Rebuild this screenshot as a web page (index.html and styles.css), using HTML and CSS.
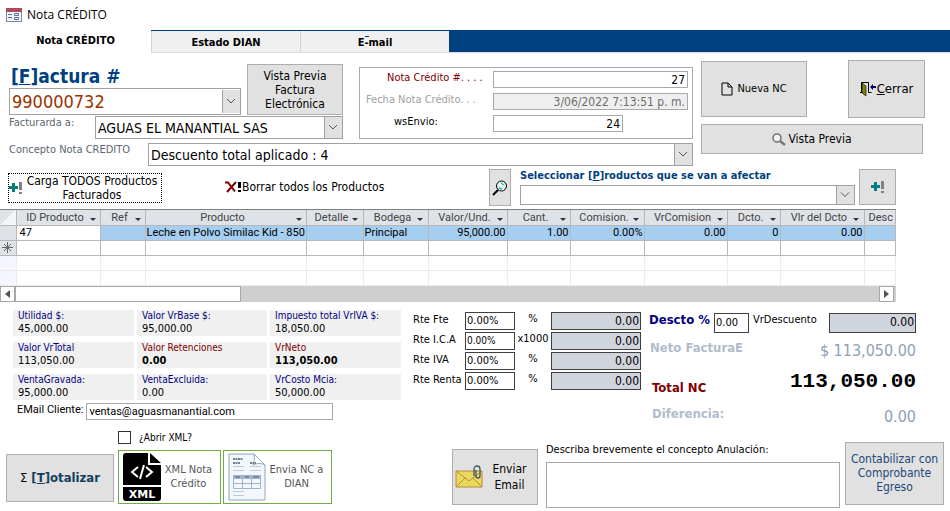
FILE: index.html
```
<!DOCTYPE html>
<html lang="es">
<head>
  <meta charset="UTF-8"/>
  <meta name="viewport" content="width=device-width,initial-scale=1"/>
  <title>Nota CRÉDITO</title>
  <link rel="stylesheet" href="styles.css">
</head>
<body>

  <!-- Icons used more than once -->
  <svg class="sprite" aria-hidden="true">
    <symbol id="plus" viewBox="0 0 14 12">
      <path d="M3 1h3v3h3v3H6v3H3V7H0V4h3z" fill="#008080"/>
      <path d="M10 0h3v8h-3zM10 10h3v2h-3z" fill="#808080"/>
    </symbol>
  </svg>

  <header class="titlebar">
    <svg width="16" height="14" viewBox="0 0 16 14" aria-hidden="true">
      <rect x=".5" y=".5" width="15" height="13" fill="#f4f6fa" stroke="#7a86a8"/>
      <path d="M0 0h16v4H0z" fill="#b04a60"/>
      <path d="M2 6.500h4M2 9.500h4" stroke="#5a6a98"/>
      <path d="M8.500 5.500h4v2h-4zM8.500 9.500h4v2h-4z" fill="#fff" stroke="#5a6a98"/>
    </svg>
    <h1>Nota CRÉDITO</h1>
  </header>

  <nav class="tabs">
    <a class="tab active" href="#nota">Nota CRÉDITO</a>
    <a class="tab" href="#estado">Estado DIAN</a>
    <a class="tab marked" href="#email">E-mail</a>
  </nav>

  <main id="nota">

    <!-- INVOICE HEADER -->
    <section class="head">
      <div class="head-left">
        <div class="head-top">
          <div class="invoice">
            <div class="invoice-row">
              <div class="invoice-num">
                <label class="big-label" for="factura">[<u>F</u>]actura #</label>
                <select class="combo combo-big" id="factura"><option>990000732</option></select>
              </div>
              <button class="btn preview-fe">Vista Previa Factura Electrónica</button>
            </div>
            <div class="client-row">
              <label class="muted" for="cliente">Facturarda a:</label>
              <select class="combo" id="cliente"><option>AGUAS EL MANANTIAL SAS</option></select>
            </div>
          </div>
          <div class="note-box">
            <label class="maroon" for="nota-num">Nota Crédito #. . . .</label>
            <input class="num" id="nota-num" value="27">
            <label class="dim" for="fecha">Fecha Nota Crédito. . .</label>
            <input class="num date" id="fecha" value="3/06/2022 7:13:51 p. m." disabled>
            <label class="ws" for="ws">wsEnvio:</label>
            <input class="num ws-input" id="ws" value="24">
          </div>
        </div>
        <div class="concept-row">
          <label class="muted" for="concepto">Concepto Nota CREDITO</label>
          <select class="combo" id="concepto"><option>Descuento total aplicado : 4</option></select>
        </div>
      </div>

      <div class="head-right">
        <div class="head-buttons">
          <button class="btn new-nc">
            <svg width="12" height="14" viewBox="0 0 12 14" aria-hidden="true"><path d="M1 1h6l4 4v8H1zM7 1v4h4" fill="none" stroke="#000"/></svg>
            Nueva NC
          </button>
          <button class="btn close">
            <svg width="17" height="16" viewBox="0 0 17 16" aria-hidden="true">
              <path d="M0 11.500h2M1.500 11V1.500h7V11.500h3" fill="none" stroke="#000"/>
              <path d="M2 2l4 3v10l-4-3z" fill="#808000" stroke="#000" stroke-width=".6"/>
              <path d="M10 6l3-3v2h3v2h-3v2z" fill="#000080"/>
            </svg>
            <span><u>C</u>errar</span>
          </button>
        </div>
        <button class="btn preview">
          <svg width="14" height="13" viewBox="0 0 14 13" aria-hidden="true">
            <circle cx="5" cy="5" r="4" fill="#f4f4f4" stroke="#777" stroke-width="1.600"/>
            <path d="M8 8l5 4" stroke="#777" stroke-width="2.400"/>
          </svg>
          Vista Previa
        </button>
      </div>
    </section>

    <!-- PRODUCT ACTIONS -->
    <section class="actions">
      <button class="link-btn load-all">
        <svg width="14" height="12" aria-hidden="true"><use href="#plus"/></svg>
        <span>Carga TODOS Productos Facturados</span>
      </button>
      <button class="link-btn">
        <svg width="17" height="12" viewBox="0 0 17 12" aria-hidden="true">
          <path d="M0 1.500h3l7 9M11 1L2 11" fill="none" stroke="#800000" stroke-width="2"/>
          <path d="M13 1h3v6h-3zM13 9h3v2h-3z"/>
        </svg>
        Borrar todos los Productos
      </button>
      <button class="btn search" aria-label="Buscar">
        <svg width="16" height="16" viewBox="0 0 16 16" aria-hidden="true">
          <path d="M1 15l5-5" stroke="#000" stroke-width="2"/>
          <circle cx="9.500" cy="6" r="5" fill="#eee" stroke="#000"/>
          <path d="M9 3l3 2M7 8l3 1" stroke="#0cc" stroke-width="1.500"/>
        </svg>
      </button>
      <div class="pick">
        <label for="productos">Seleccionar [<u>P</u>]roductos que se van a afectar</label>
        <select class="combo" id="productos"><option></option></select>
      </div>
      <button class="btn add" aria-label="Agregar">
        <svg width="14" height="12" aria-hidden="true"><use href="#plus"/></svg>
      </button>
    </section>

    <!-- PRODUCT GRID -->
    <section class="sheet">
      <table>
        <colgroup>
          <col class="c-sel"><col class="c-id"><col class="c-ref"><col class="c-prod"><col class="c-det"><col class="c-bod">
          <col class="c-val"><col class="c-cant"><col class="c-com"><col class="c-vrc"><col class="c-dcto"><col class="c-vlr"><col>
        </colgroup>
        <thead>
          <tr>
            <th class="corner"></th>
            <th><span>ID Producto</span></th><th><span>Ref</span></th><th><span>Producto</span></th>
            <th><span>Detalle</span></th><th><span>Bodega</span></th><th><span>Valor/Und.</span></th>
            <th><span>Cant.</span></th><th><span>Comision.</span></th><th><span>VrComision</span></th>
            <th><span>Dcto.</span></th><th><span>Vlr del Dcto</span></th><th class="cut"><span>Desc</span></th>
          </tr>
        </thead>
        <tbody>
          <tr class="current">
            <td class="sel"></td><td class="editing">47</td><td></td><td>Leche en Polvo Similac Kid - 850</td><td></td><td>Principal</td>
            <td class="r">95,000.00</td><td class="r">1.00</td><td class="r">0.00%</td><td class="r">0.00</td><td class="r">0</td><td class="r">0.00</td><td></td>
          </tr>
          <tr>
            <td class="sel"><svg width="11" height="11" viewBox="0 0 11 11" aria-hidden="true"><path d="M5.500 0v11M0 5.500h11M2 2l7 7M9 2l-7 7" stroke="#666"/></svg></td>
            <td></td><td></td><td></td><td></td><td></td><td></td><td></td><td></td><td></td><td></td><td></td><td></td>
          </tr>
          <tr class="blank"><td class="sel"></td><td></td><td></td><td></td><td></td><td></td><td></td><td></td><td></td><td></td><td></td><td></td><td></td></tr>
          <tr class="blank"><td class="sel"></td><td></td><td></td><td></td><td></td><td></td><td></td><td></td><td></td><td></td><td></td><td></td><td></td></tr>
        </tbody>
      </table>
      <div class="hscroll">
        <button class="arrow" aria-label="Izquierda"><svg width="5" height="8" viewBox="0 0 5 8"><path d="M5 0v8L0 4z" fill="#555"/></svg></button>
        <div class="thumb"></div>
        <button class="arrow" aria-label="Derecha"><svg width="5" height="8" viewBox="0 0 5 8"><path d="M0 0v8l5-4z" fill="#555"/></svg></button>
      </div>
    </section>

    <!-- TOTALS -->
    <section class="totals">
      <div class="summary">
        <dl class="cards">
          <div><dt>Utilidad $:</dt><dd>45,000.00</dd></div>
          <div><dt>Valor VrBase $:</dt><dd>95,000.00</dd></div>
          <div><dt>Impuesto total VrIVA $:</dt><dd>18,050.00</dd></div>
          <div><dt>Valor VrTotal</dt><dd>113,050.00</dd></div>
          <div class="strong"><dt>Valor Retenciones</dt><dd>0.00</dd></div>
          <div class="strong"><dt>VrNeto</dt><dd>113,050.00</dd></div>
          <div><dt>VentaGravada:</dt><dd>95,000.00</dd></div>
          <div><dt>VentaExcluida:</dt><dd>0.00</dd></div>
          <div><dt>VrCosto Mcia:</dt><dd>50,000.00</dd></div>
        </dl>
        <div class="mail-row">
          <label for="mail">EMail Cliente:</label>
          <input id="mail" value="ventas@aguasmanantial.com">
        </div>
      </div>

      <div class="rates">
        <label for="fte">Rte Fte</label><input id="fte" value="0.00%"><span>%</span><output>0.00</output>
        <label for="ica">Rte I.C.A</label><input class="small" id="ica" value="0.00%"><span>x1000</span><output>0.00</output>
        <label for="iva">Rte IVA</label><input id="iva" value="0.00%"><span>%</span><output>0.00</output>
        <label for="renta">Rte Renta</label><input id="renta" value="0.00%"><span>%</span><output>0.00</output>
      </div>

      <div class="results">
        <div class="discount">
          <label class="navy" for="descto">Descto %</label>
          <input id="descto" value="0.00">
          <span>VrDescuento</span>
          <output>0.00</output>
        </div>
        <div class="result soft"><span>Neto FacturaE</span><output>$ 113,050.00</output></div>
        <div class="result total"><span>Total NC</span><output>113,050.00</output></div>
        <div class="result soft diff"><span>Diferencia:</span><output>0.00</output></div>
      </div>
    </section>

    <!-- FOOTER BUTTONS -->
    <section class="foot">
      <button class="btn totalize"><span>Σ</span> <b>[<u>T</u>]otalizar</b></button>
      <div class="xml">
        <label class="open-xml"><input type="checkbox"> ¿Abrir XML?</label>
        <div class="xml-buttons">
          <button class="green-btn">
            <svg width="38" height="48" viewBox="0 0 38 48" aria-hidden="true">
              <path d="M3 0h22v12h13v20H0V3a3 3 0 0 1 3-3z"/>
              <path d="M27 0l11 10H27zM0 34h38v11a3 3 0 0 1-3 3H3a3 3 0 0 1-3-3z"/>
              <path d="M15 14l-6 5 6 5M23 14l6 5-6 5M21 12l-4 14" fill="none" stroke="#fff" stroke-width="2"/>
              <text class="xml-text" x="19" y="45" text-anchor="middle">XML</text>
            </svg>
            <span>XML Nota Crédito</span>
          </button>
          <button class="green-btn">
            <svg width="38" height="48" viewBox="0 0 38 48" aria-hidden="true">
              <path d="M1 1h25l11 11v35H1z" fill="#f3f7fb" stroke="#8fa6bd"/>
              <path d="M26 1c1 5 0 9-1 11 4-2 8-2 12 0z" fill="#fff" stroke="#8fa6bd"/>
              <path d="M5 6h10M5 10h7M22 10h6" stroke="#4a5a6c" stroke-width="1.500" stroke-dasharray="2 .5"/>
              <path d="M5 13.500h11M5 17.500h11M22 13.500h11M22 17.500h11M5 38.500h11M5 42.500h11" stroke="#b9cbdc"/>
              <path d="M5 22h28v4H5z" fill="#a3b7cb"/>
              <path d="M7 24h5M17 24h4M25 24h6" stroke="#4a5a6c"/>
              <path d="M5.500 22.500h27v13h-27zM5.500 30.500h27M14.500 22v13M23.500 22v13" fill="none" stroke="#9db4ca"/>
            </svg>
            <span>Envia NC a DIAN</span>
          </button>
        </div>
      </div>
      <button class="btn send">
        <svg width="29" height="24" viewBox="0 0 29 24" aria-hidden="true">
          <path d="M1 6h26v16H1z" fill="#e8d95c" stroke="#b98a3c"/>
          <path d="M1 6l13 10L27 6M1 22l9-9M27 22l-9-9" fill="none" stroke="#c08a3a"/>
          <path d="M19 11V4a3 3 0 0 1 6 0v7a2 2 0 0 1-4 0V5" fill="none" stroke="#3a5570" stroke-width="1.300"/>
        </svg>
        <span>Enviar Email</span>
      </button>
      <div class="concept">
        <label for="anulacion">Describa brevemente el concepto Anulación:</label>
        <textarea id="anulacion"></textarea>
      </div>
      <button class="btn egress">Contabilizar con Comprobante Egreso</button>
    </section>

  </main>
</body>
</html>
```
FILE: styles.css
```
* { box-sizing: border-box; }
body {
  margin: 0;
  font: 12px/14px "DejaVu Sans Condensed", "Noto Sans", sans-serif;
  background: #fff;
  color: #000;
}
input, select, button, textarea {
  font: inherit;
  color: inherit;
  margin: 0;
  border-radius: 0;
}
.sprite { display: block; width: 0; height: 0; }
svg { flex: none; }

.titlebar {
  display: flex;
  align-items: center;
  gap: 5px;
  height: 30px;
  padding: 0 6px;
}
.titlebar h1 {
  margin: 0;
  font: 12px/16px "Open Sans", sans-serif;
}

.tabs {
  display: flex;
  height: 23px;
  background: linear-gradient(90deg, #fff 151px, #003f80 151px);
  border-bottom: 1px solid #dcdcdc;
}
.tab {
  width: 149px;
  margin-top: 1px;
  padding-top: 5px;
  background: #f0f0f0;
  border-left: 1px solid #d4d4d4;
  color: #000;
  font-weight: bold;
  font-size: 11px;
  text-align: center;
  text-decoration: none;
}
.tab.active {
  width: 151px;
  height: 23px;
  margin-top: 0;
  padding-top: 4px;
  background: #fff;
  border: 0;
}
.marked {
  background: linear-gradient(#003f80, #003f80) 64px 5px / 4px 1px no-repeat #f0f0f0;
}

.btn {
  display: flex;
  align-items: center;
  justify-content: center;
  gap: 4px;
  padding: 0;
  background: #e1e1e1;
  border: 1px solid #adadad;
}
.combo {
  appearance: none;
  height: 23px;
  padding: 0 22px 0 2px;
  font-size: 14px;
  border: 1px solid #a0a0a0;
  background:
    url("data:image/svg+xml,%3Csvg xmlns='http://www.w3.org/2000/svg' width='18' height='23'%3E%3Cpath d='M.5 0v23' stroke='%23a0a0a0'/%3E%3Cpath d='M1 0h17v23H1z' fill='%23e1e1e1'/%3E%3Cpath d='M5 9l4 4 4-4' fill='none' stroke='%23555'/%3E%3C/svg%3E") right center no-repeat #fff;
}

/* Invoice header */
.head {
  display: flex;
  gap: 8px;
  padding: 7px 25px 0 9px;
}
.head-left { flex: 1; }
.head-top { display: flex; gap: 16px; }
.invoice { flex: 1; }
.invoice-row { display: flex; gap: 6px; margin-top: 4px; }
.invoice-num { flex: 1; display: flex; flex-direction: column; }
.big-label {
  padding: 2px;
  font-size: 19px;
  line-height: 20px;
  font-weight: bold;
  color: #003f80;
}
.combo-big { height: 27px; font-size: 18px; color: #993300; }
.preview-fe { width: 96px; height: 51px; padding: 0 8px; }
.client-row, .concept-row { display: flex; }
.client-row { margin-top: 1px; }
.client-row .muted { width: 86px; }
.client-row .combo, .concept-row .combo { flex: 1; }
.muted { color: #5c6670; font-size: 11px; }
.concept-row { margin-top: 4px; }
.concept-row .muted { width: 139px; }

.note-box {
  display: grid;
  grid-template-columns: 120px 195px;
  align-content: start;
  gap: 5px 9px;
  width: 334px;
  height: 72px;
  margin-top: 7px;
  padding: 3px 4px 0;
  border: 1px solid #a8a8b0;
  font-size: 11px;
}
.note-box label { padding-left: 2px; }
.num {
  height: 17px;
  padding: 0 2px;
  border: 1px solid #a8a8b0;
  font-size: 12px;
  text-align: right;
}
.note-box .maroon { padding-left: 23px; color: #800000; }
.dim { color: #a0a0a0; }
.date { background: #efefef; color: #6d6d6d; }
.note-box .ws { padding-left: 30px; }
.ws-input { width: 130px; }

.head-right { width: 224px; }
.head-buttons { display: flex; justify-content: space-between; }
.new-nc { width: 106px; height: 56px; margin-top: 1px; font-size: 11px; }
.close { width: 77px; height: 58px; gap: 0; font-size: 13px; }
.preview { width: 222px; height: 30px; margin-top: 6px; gap: 2px; }

/* Product actions */
.actions {
  display: flex;
  align-items: flex-start;
  height: 40px;
  margin-top: 3px;
  padding: 0 54px 0 8px;
}
.link-btn {
  display: flex;
  align-items: center;
  padding: 0;
  background: none;
  border: 0;
  white-space: nowrap;
  margin: 11px auto 0 63px;
}
.load-all {
  width: 154px;
  height: 30px;
  margin: 4px 0 0;
  border: 1px dotted #000;
  white-space: normal;
}
.search { width: 22px; height: 37px; margin-right: 9px; }
.pick { width: 335px; margin-right: 4px; }
.pick label {
  display: block;
  font-size: 11px;
  font-weight: bold;
  color: #003f80;
}
.pick .combo { width: 100%; height: 20px; margin-top: 2px; }
.add { width: 37px; height: 36px; }

/* Product grid */
.sheet { margin-right: 54px; border-top: 1px solid #808080; }
table {
  width: 100%;
  table-layout: fixed;
  border-collapse: collapse;
  font: 11px/13px Roboto, "Liberation Sans", sans-serif;
}
.c-sel { width: 16px; }
.c-id { width: 84px; }
.c-ref { width: 45px; }
.c-prod { width: 161px; }
.c-det { width: 57px; }
.c-bod { width: 65px; }
.c-val { width: 79px; }
.c-cant { width: 63px; }
.c-com { width: 74px; }
.c-vrc { width: 83px; }
.c-dcto { width: 53px; }
.c-vlr { width: 84px; }
th {
  height: 15px;
  padding: 0 4px;
  background: #dfe3e8;
  border-right: 1px solid #b4b8bc;
  color: #444;
  font-weight: normal;
  white-space: nowrap;
}
.corner { background: linear-gradient(135deg, #dfe3e8 50%, #f4f6f8 50%); }
th span { display: flex; align-items: center; }
th span::before { content: ""; margin-right: auto; }
th span::after {
  content: "";
  margin: 4px 0 0 auto;
  border: 3px solid transparent;
  border-top-color: #333;
  border-bottom: 0;
}
.cut span::after { display: none; }
td {
  height: 15px;
  padding: 0 1px;
  border: 1px solid #b8b8b8;
  white-space: nowrap;
  overflow: hidden;
}
.current td { background: #a5cef0; }
.current .editing { background: #fff; padding-left: 3px; }
td.sel, .current td.sel { background: #dfe3e8; border-left: 0; }
.sel svg { display: block; margin: 0 auto; }
.blank td { border-color: #ececec; }
.blank td.sel { background: #f5f6ff; }
td.r { text-align: right; }

.hscroll {
  display: flex;
  height: 16px;
  padding-right: 2px;
  background: #cfcfcf;
}
.arrow {
  display: flex;
  align-items: center;
  justify-content: center;
  width: 15px;
  padding: 0;
  background: #fff;
  border: 1px solid #a8a8a8;
}
.thumb {
  width: 226px;
  margin-right: auto;
  background: #fff;
  border: 1px solid #a8a8a8;
}

/* Totals */
.totals {
  display: flex;
  padding: 8px 34px 0 13px;
}
.summary { width: 394px; }
.cards {
  display: grid;
  grid-template-columns: 121px 130px 131px;
  gap: 6px 3px;
  margin: 0;
}
.cards div { height: 26px; padding: 0 5px; background: #f0f0f0; }
.cards dt { font-size: 10px; line-height: 11px; color: #000080; }
.cards dd { margin: 0; font-size: 11px; line-height: 15px; }
.cards .strong dt { color: #800000; }
.cards .strong dd { font-weight: bold; }
.mail-row {
  display: flex;
  gap: 3px;
  margin-top: 3px;
  padding-left: 4px;
  font: 11px/14px Roboto, sans-serif;
}
.mail-row input {
  width: 247px;
  height: 17px;
  padding: 0 2px;
  border: 1px solid #a8a8a8;
}

.rates {
  display: grid;
  grid-template-columns: 52px 50px 36px 90px;
  grid-auto-rows: 18px;
  row-gap: 2px;
  align-self: flex-start;
  margin: 2px 0 0 6px;
}
.rates label { line-height: 16px; font-size: 11px; }
.rates span { line-height: 14px; font-size: 11px; text-align: center; }
.rates input, .discount input {
  width: 100%;
  padding: 0 1px;
  border: 1px solid #404040;
  font-size: 11px;
}
.rates .small { font-size: 10px; }
output { text-align: right; }
.rates output, .discount output {
  padding: 0 1px;
  background: #d0d4dd;
  border: 1px solid #404040;
  line-height: 16px;
}

.results { flex: 1; margin: 3px 0 0 8px; }
.discount { display: flex; align-items: flex-start; gap: 4px; }
.navy { font-size: 13px; font-weight: bold; color: #000080; }
.discount input { width: 35px; height: 20px; }
.discount span { font-size: 11px; }
.discount output { width: 87px; height: 20px; margin-left: auto; }
.result { display: flex; justify-content: space-between; }
.result span { font-size: 13px; font-weight: bold; }
.result output { font-size: 16px; line-height: 20px; }
.soft { margin-top: 8px; padding-left: 1px; color: #8ea0b8; }
.soft span { color: #b0bccb; }
.total { align-items: flex-end; margin-top: 8px; padding-left: 3px; }
.total span { color: #800000; }
.total output { font: bold 21px/26px "Liberation Mono", monospace; }
.diff { margin-top: 12px; padding-left: 3px; }

/* Footer buttons */
.foot {
  display: flex;
  align-items: flex-start;
  padding: 0 6px;
  margin-top: 4px;
}
.totalize { width: 108px; height: 48px; margin: 23px 4px 0 0; font-size: 13px; }
.totalize b { color: #14405e; }
.xml { display: flex; flex-direction: column; gap: 5px; }
.open-xml { display: flex; align-items: center; gap: 8px; font-size: 10px; }
.open-xml input {
  appearance: none;
  width: 13px;
  height: 13px;
  background: #fff;
  border: 1px solid #333;
}
.xml-buttons { display: flex; gap: 2px; }
.green-btn {
  display: flex;
  align-items: center;
  width: 103px;
  height: 54px;
  padding: 0 4px;
  background: #fff;
  border: 1px solid #70ad47;
  color: #555;
  font-size: 11px;
}
.green-btn:last-child { width: 109px; }
.green-btn span { flex: 1; }
.xml-text { font: bold 11px "DejaVu Sans", sans-serif; fill: #fff; }
.send { width: 86px; height: 56px; margin: 18px 8px 0 auto; padding: 0 2px; gap: 0; }
.send span { flex: 1; line-height: 16px; }
.concept { width: 294px; margin: 12px 5px 0 0; font-size: 11px; }
.concept textarea {
  display: block;
  width: 100%;
  height: 46px;
  margin-top: 5px;
  border: 1px solid #a8a8a8;
  resize: none;
}
.egress { width: 99px; height: 63px; margin-top: 11px; color: #24477c; }
```
